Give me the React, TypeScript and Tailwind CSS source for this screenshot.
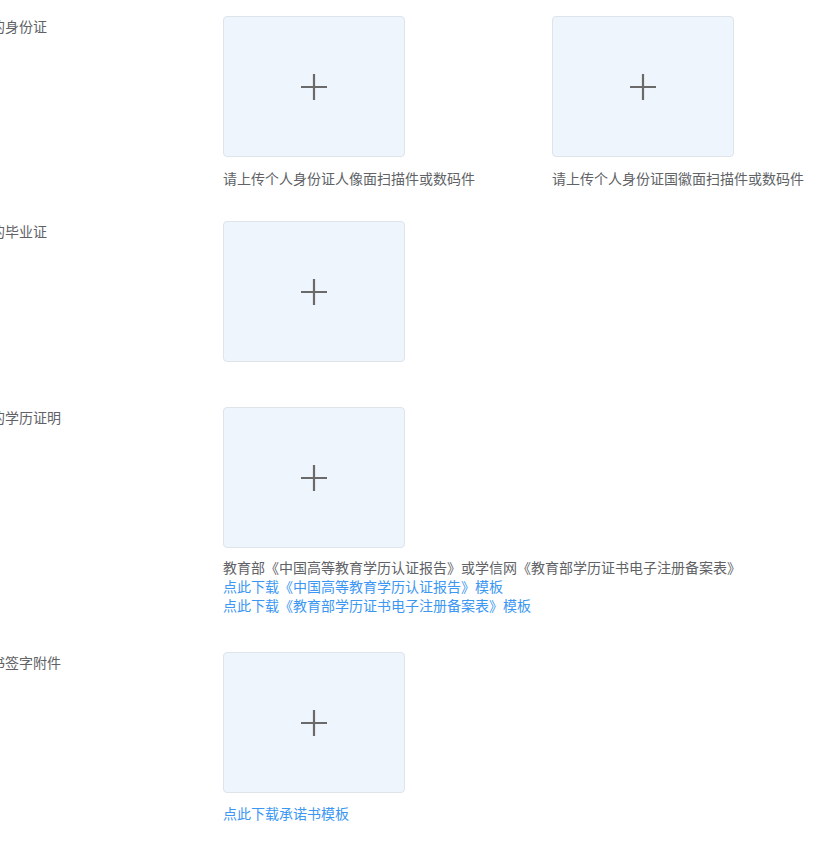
const font = { fontFamily: '"Noto Sans CJK SC", "Microsoft YaHei", sans-serif' };

function UploadBox() {
  return (
    <div className="w-[182px] h-[141px] rounded-[4px] border border-[#dfe4ea] bg-[#eff5fc] flex items-center justify-center">
      <svg width="28" height="28" viewBox="0 0 28 28" fill="none">
        <path d="M14 1v26M1 14h26" stroke="#6a6a6a" strokeWidth="2.2" />
      </svg>
    </div>
  );
}

function Label({ text }: { text: string }) {
  return (
    <div className="w-[223px] shrink-0 overflow-hidden">
      <div className="-ml-[9px] whitespace-nowrap text-[14px] leading-[20px] text-[#606266]">{text}</div>
    </div>
  );
}

export default function App() {
  return (
    <div className="w-[832px] h-[846px] bg-white overflow-hidden" style={font}>
      {/* 身份证 */}
      <div className="flex items-start pt-[16px]">
        <Label text="的身份证" />
        <div className="flex">
          <div className="w-[329px]">
            <UploadBox />
            <p className="mt-[11px] text-[14px] leading-[20px] text-[#606266] whitespace-nowrap">
              请上传个人身份证人像面扫描件或数码件
            </p>
          </div>
          <div>
            <UploadBox />
            <p className="mt-[11px] text-[14px] leading-[20px] text-[#606266] whitespace-nowrap">
              请上传个人身份证国徽面扫描件或数码件
            </p>
          </div>
        </div>
      </div>

      {/* 毕业证 */}
      <div className="flex items-start mt-[33px]">
        <Label text="的毕业证" />
        <UploadBox />
      </div>

      {/* 学历证明 */}
      <div className="flex items-start mt-[45px]">
        <Label text="的学历证明" />
        <div>
          <UploadBox />
          <div className="mt-[10px] text-[14px] leading-[19px] whitespace-nowrap">
            <p className="text-[#606266]">
              教育部《中国高等教育学历认证报告》或学信网《教育部学历证书电子注册备案表》
            </p>
            <a className="block text-[#3c97f2]" href="#">
              点此下载《中国高等教育学历认证报告》模板
            </a>
            <a className="block text-[#3c97f2]" href="#">
              点此下载《教育部学历证书电子注册备案表》模板
            </a>
          </div>
        </div>
      </div>

      {/* 承诺书 */}
      <div className="flex items-start mt-[37px]">
        <Label text="书签字附件" />
        <div>
          <UploadBox />
          <a className="block mt-[10px] text-[14px] leading-[20px] text-[#3c97f2] whitespace-nowrap" href="#">
            点此下载承诺书模板
          </a>
        </div>
      </div>
    </div>
  );
}
